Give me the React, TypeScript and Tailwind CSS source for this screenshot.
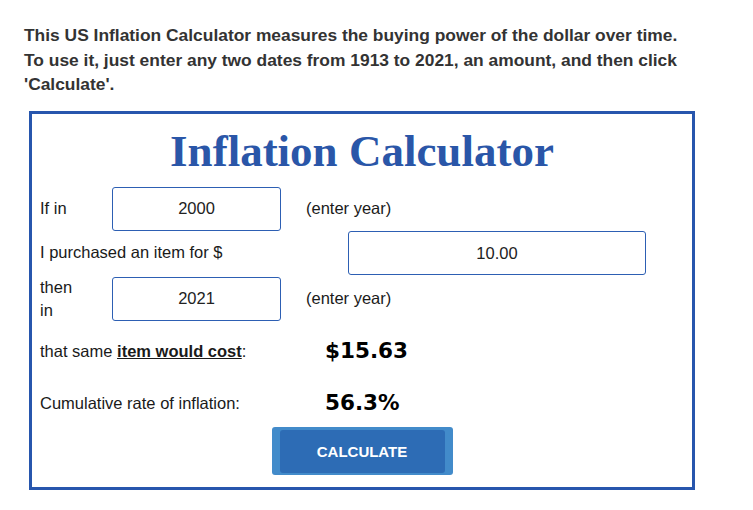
import React from "react";

const sans = { fontFamily: '"Liberation Sans", Arial, sans-serif' };

export default function App() {
  return (
    <div className="w-[753px] h-[510px] bg-white pt-[23px] pl-[24px]" style={sans}>
      <p className="text-[17.4px] leading-[24.5px] font-bold text-[#333333] w-[720px]">
        This US Inflation Calculator measures the buying power of the dollar over time.
        <br />
        To use it, just enter any two dates from 1913 to 2021, an amount, and then click
        <br />
        'Calculate'.
      </p>
      <div className="mt-[14px] ml-[5px] w-[666px] h-[379px] border-[3px] border-[#2756ad]">
        <h1
          className="mt-[12px] text-center text-[45px] leading-[50px] font-bold text-[#2a56a8]"
          style={{ fontFamily: '"Liberation Serif", "Times New Roman", serif' }}
        >
          Inflation Calculator
        </h1>
        <div className="mt-[11px] pl-[8px] text-[16.5px] text-[#1a1a1a]">
          <div className="flex items-center h-[44px]">
            <div className="w-[72px]">If in</div>
            <input
              readOnly
              value="2000"
              className="w-[169px] h-[44px] border border-[#2d5fb3] rounded-[3px] text-center text-[16.5px] text-[#222]"
            />
            <div className="ml-[25px]">(enter year)</div>
          </div>
          <div className="flex items-center h-[44px]">
            <div className="w-[308px]">I purchased an item for $</div>
            <input
              readOnly
              value="10.00"
              className="w-[298px] h-[44px] pt-[2px] border border-[#2d5fb3] rounded-[3px] text-center text-[16.5px] text-[#222]"
            />
          </div>
          <div className="flex items-center h-[44px] mt-[2px]">
            <div className="w-[72px] leading-[23px]">
              <div className="w-[40px]">then in</div>
            </div>
            <input
              readOnly
              value="2021"
              className="w-[169px] h-[44px] border border-[#2d5fb3] rounded-[3px] text-center text-[16.5px] text-[#222]"
            />
            <div className="ml-[25px]">(enter year)</div>
          </div>
          <div className="flex items-center h-[30px] mt-[16px]">
            <div className="w-[285px]">
              that same <span className="font-bold underline">item would cost</span>:
            </div>
            <div
              className="text-[21.5px] font-bold text-black"
              style={{ fontFamily: '"DejaVu Sans", Verdana, sans-serif' }}
            >
              $15.63
            </div>
          </div>
          <div className="flex items-center h-[30px] mt-[22px]">
            <div className="w-[285px]">Cumulative rate of inflation:</div>
            <div
              className="text-[21.5px] font-bold text-black"
              style={{ fontFamily: '"DejaVu Sans", Verdana, sans-serif' }}
            >
              56.3%
            </div>
          </div>
          <div className="flex justify-center pr-[8px] mt-[8px]">
            <button className="w-[181px] h-[48px] bg-[#428bca] rounded-[3px] pl-[8px] pr-[8px] pt-[3px] pb-[2px]">
              <div className="w-full h-full bg-[#2d6cb5] rounded-[3px] flex items-center justify-center pt-[2px] text-white font-bold text-[15px]">
                CALCULATE
              </div>
            </button>
          </div>
        </div>
      </div>
    </div>
  );
}
